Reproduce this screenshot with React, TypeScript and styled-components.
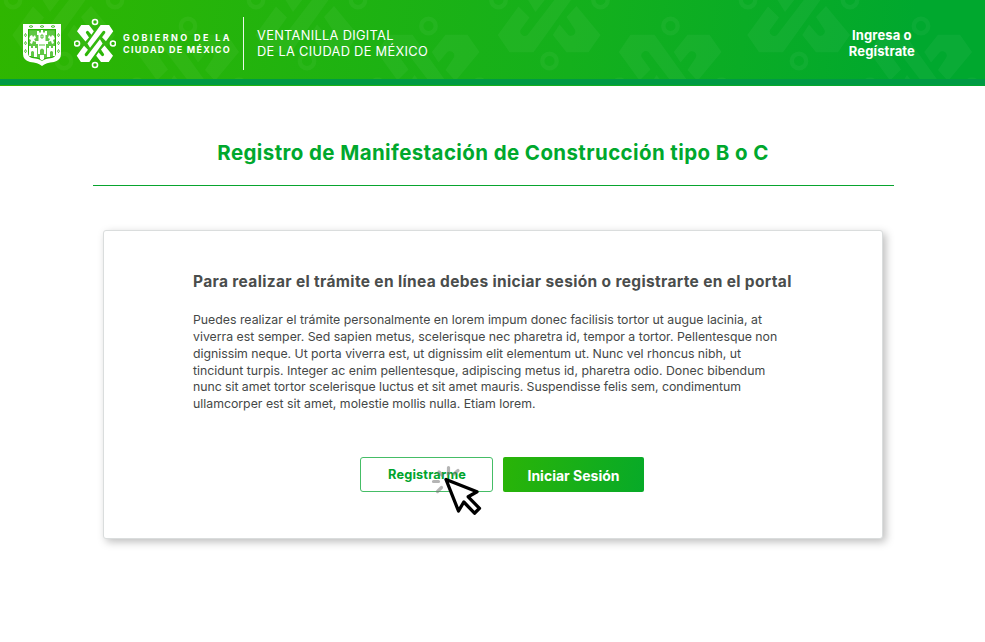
import React from "react";
import styled, { createGlobalStyle } from "styled-components";

const GlobalStyle = createGlobalStyle`
  * { box-sizing: border-box; }
  body { margin: 0; background: #fff; font-family: Inter, "Liberation Sans", sans-serif; }
`;

const Page = styled.div`
  width: 985px;
  height: 642px;
  overflow: hidden;
  background: #fff;
`;

const Header = styled.header`
  position: relative;
  display: flex;
  align-items: flex-start;
  height: 86px;
  padding: 0 70px 0 23px;
  color: #fff;
  background: linear-gradient(98deg, #2fb600 0%, #14b01c 58%, #00a82e 92%);
`;

const Pattern = styled.svg`
  position: absolute;
  inset: 0;
`;

const HeaderStrip = styled.div`
  position: absolute;
  left: 0;
  right: 0;
  top: 79px;
  height: 6px;
  background: #009a44;
`;

const Shield = styled.svg`
  position: relative;
  flex: none;
  margin-top: 23px;
`;

const Emblem = styled.svg`
  position: relative;
  flex: none;
  margin: 18px 0 0 12px;
`;

const BrandName = styled.div`
  position: relative;
  margin: 32px 0 0 7px;
  width: 120px;
  height: 30px;
`;

const BrandLine = styled.div<{ $tracking: number }>`
  font-size: 9px;
  font-weight: 700;
  line-height: 12px;
  white-space: nowrap;
  letter-spacing: ${(p) => p.$tracking}px;
`;

const Divider = styled.div`
  position: relative;
  width: 1px;
  height: 53px;
  margin-top: 17px;
  background: rgba(255, 255, 255, 0.9);
`;

const PortalName = styled.div`
  position: relative;
  margin: 28px 0 0 13px;
  font-size: 12.8px;
  line-height: 16px;
  letter-spacing: 0.32px;
  white-space: nowrap;
`;

const LoginLink = styled.a`
  position: relative;
  margin: 27px 0 0 auto;
  font-size: 13px;
  font-weight: 700;
  line-height: 16px;
  letter-spacing: 0.13px;
  text-align: center;
  white-space: nowrap;
`;

const Main = styled.main`
  display: flex;
  flex-direction: column;
  align-items: center;
`;

const Title = styled.h1`
  width: 801px;
  height: 100px;
  margin: 0 0 0 1px;
  padding-top: 54px;
  border-bottom: 1px solid #08a42e;
  color: #00a82d;
  font-size: 20.5px;
  font-weight: 700;
  line-height: 26px;
  letter-spacing: 0.39px;
  text-align: center;
  white-space: nowrap;
`;

const Card = styled.section`
  width: 780px;
  height: 309px;
  margin: 44px 0 0 1px;
  padding: 40px 89px 0;
  border: 1px solid #dadddd;
  border-radius: 3px;
  background: #fff;
  box-shadow: 3px 3px 8px rgba(0, 0, 0, 0.26);
`;

const CardTitle = styled.h2`
  margin: 0;
  color: #4a4d4c;
  font-size: 15.5px;
  font-weight: 700;
  line-height: 21px;
  letter-spacing: 0.34px;
  white-space: nowrap;
`;

const Description = styled.p`
  margin: 20px 0 0;
  color: #454847;
  font-size: 12.3px;
  line-height: 16.85px;
`;

const TextLine = styled.span<{ $tracking?: number }>`
  display: block;
  white-space: nowrap;
  letter-spacing: ${(p) => p.$tracking ?? 0}px;
`;

const Actions = styled.div`
  display: flex;
  gap: 10px;
  height: 35px;
  margin: 43.9px 0 0 167px;
`;

const Button = styled.button<{ $primary?: boolean }>`
  position: relative;
  width: ${(p) => (p.$primary ? 141 : 133)}px;
  height: 35px;
  padding: ${(p) => (p.$primary ? "3px 0 0" : "0 0 0 1px")};
  border: ${(p) => (p.$primary ? "0" : "1px solid #45bd66")};
  border-radius: ${(p) => (p.$primary ? 2 : 3)}px;
  background: ${(p) => (p.$primary ? "linear-gradient(100deg, #2ab407, #07aa28)" : "#fff")};
  color: ${(p) => (p.$primary ? "#fff" : "#00a42d")};
  font-family: inherit;
  font-size: ${(p) => (p.$primary ? 14 : 12.8)}px;
  font-weight: 700;
  letter-spacing: ${(p) => (p.$primary ? 0 : 0.15)}px;
  white-space: nowrap;
`;

const Cursor = styled.svg`
  position: absolute;
  left: 69px;
  top: 5.5px;
  overflow: visible;
`;

const hooks =
  "M-51.7 35L-31 6.5L-20 17.5L-29 30a4.5 4.5 0 0 0 7 5L14 -12L21.5 0L-16 52.3H-40Z" +
  "M3.3 35L10 24.5L18 34a4.2 4.2 0 0 0 7-5L17 17L27 6L51 35L39 52.3H17Z";

function Motif() {
  return (
    <>
      <path d={hooks} />
      <path d={hooks} transform="rotate(180)" />
      {[[-51, 0], [51, 0], [0, -61], [0, 61]].map(([x, y]) => (
        <circle key={`${x},${y}`} cx={x} cy={y} r="7.2" fill="none" stroke="currentColor" strokeWidth="4.4" />
      ))}
    </>
  );
}

function HeaderPattern() {
  return (
    <Pattern width="985" height="79" viewBox="0 0 985 79" fill="currentColor" opacity="0.038">
      {[64, 307, 549.5, 799].map((x) => (
        <g key={x} transform={`translate(${x} 0)`}><Motif /></g>
      ))}
      {[188, 428.5, 670.5, 921].map((x) => (
        <g key={x} transform={`translate(${x} 87) scale(1 -1)`}><Motif /></g>
      ))}
    </Pattern>
  );
}

function CityShield() {
  return (
    <Shield width="39" height="44" viewBox="0 0 39 44">
      <path d="M0 1H38V31Q38 37 31 39Q23 39.5 19 43Q15 39.5 7 39Q0 37 0 31Z" fill="#fff" />
      <path d="M5 6H33V30Q33 34 29 35Q22 35.5 19 38Q16 35.5 9 35Q5 34 5 30Z" fill="#2ab407" />
      <path d="M6.200 7.200H31.800V30Q31.800 33 29 33.800Q22 34.500 19 36.500Q16 34.500 9 33.800Q6.200 33 6.200 30Z" fill="#fff" fillOpacity="0.25" />
      <g fill="none" stroke="#2ab407" strokeWidth="0.8">
        <path d="M6 3.500l2-1 2 1-2 1zM17 3.5l2-1 2 1-2 1zM28 3.500l2-1 2 1-2 1z" />
        {[12, 20, 28].map((y) => (
          <path key={y} d={`M2.5 ${y - 1.5}l1 1.7-1 1.5-1-1.5zM35.5 ${y - 1.5}l1 1.7-1 1.5-1-1.5z`} />
        ))}
      </g>
      <g fill="#fff">
        <path d="M14 8h2v1.4h2V7h2v2.4h2V8h2v4h-1.5v6H25v3h-2v10h-2v-4q-2-3-4 0v4h-2V21h-2v-3h2.5v-6H14z" />
        <path d="M6 23h2v2h2v-2h2v2h2v9H11v-5q-1.500-2-3 0v4H6zM32 23h-2v2h-2v-2h-2v2h-2v9h3v-5q1.500-2 3 0v4h2z" />
        <path d="M7 13l2-1 1 2 2-2 1 3-2 1 2 3-3-1-1 3-2-1 1-3-2-1zM31 13l-2-1-1 2-2-2-1 3 2 1-2 3 3-1 1 3 2-1-1-3 2-1z" />
        <path d="M17 32h4v4l-2 1.500-2-1.500z" />
      </g>
      <path d="M18 12h2v3h-2zM16 22h6" fill="none" stroke="#2ab407" strokeWidth="0.8" />
    </Shield>
  );
}

function ClickCursor() {
  return (
    <Cursor width="54" height="56" viewBox="0 0 54 56" fill="none">
      <path d="M18.500 4.500v6M28 7.500l-4 3.500M3.500 18.500h5M11.500 24.500l-4 4M9 9l3 3" stroke="#777" strokeOpacity="0.55" strokeWidth="3.2" strokeLinecap="round" />
      <path d="M16 16.500L47 28.800L38.200 33.800L49.500 45.300L44.500 50.200L33.800 39L28.500 48Z" fill="#fff" stroke="#000" strokeWidth="3.300" strokeLinejoin="round" />
      <path d="M17.500 9.500v3" stroke="#777" strokeOpacity="0.3" strokeWidth="2" />
    </Cursor>
  );
}

export default function App() {
  return (
    <Page>
      <GlobalStyle />
      <Header>
        <HeaderPattern />
        <HeaderStrip />
        <CityShield />
        <Emblem width="42" height="51" viewBox="-59.500 -72.250 119 144.500" fill="currentColor">
          <Motif />
        </Emblem>
        <BrandName>
          <BrandLine $tracking={2.4}>GOBIERNO DE LA</BrandLine>
          <BrandLine $tracking={1.25}>CIUDAD DE MÉXICO</BrandLine>
        </BrandName>
        <Divider />
        <PortalName>
          VENTANILLA DIGITAL
          <br />
          DE LA CIUDAD DE MÉXICO
        </PortalName>
        <LoginLink>
          Ingresa o
          <br />
          Regístrate
        </LoginLink>
      </Header>
      <Main>
        <Title>Registro de Manifestación de Construcción tipo B o C</Title>
        <Card>
          <CardTitle>Para realizar el trámite en línea debes iniciar sesión o registrarte en el portal</CardTitle>
          <Description>
            <TextLine>Puedes realizar el trámite personalmente en lorem impum donec facilisis tortor ut augue lacinia, at</TextLine>
            <TextLine>viverra est semper. Sed sapien metus, scelerisque nec pharetra id, tempor a tortor. Pellentesque non</TextLine>
            <TextLine $tracking={-0.021}>dignissim neque. Ut porta viverra est, ut dignissim elit elementum ut. Nunc vel rhoncus nibh, ut</TextLine>
            <TextLine>tincidunt turpis. Integer ac enim pellentesque, adipiscing metus id, pharetra odio. Donec bibendum</TextLine>
            <TextLine $tracking={-0.045}>nunc sit amet tortor scelerisque luctus et sit amet mauris. Suspendisse felis sem, condimentum</TextLine>
            <TextLine>ullamcorper est sit amet, molestie mollis nulla. Etiam lorem.</TextLine>
          </Description>
          <Actions>
            <Button>
              Registrarme
              <ClickCursor />
            </Button>
            <Button $primary>Iniciar Sesión</Button>
          </Actions>
        </Card>
      </Main>
    </Page>
  );
}
